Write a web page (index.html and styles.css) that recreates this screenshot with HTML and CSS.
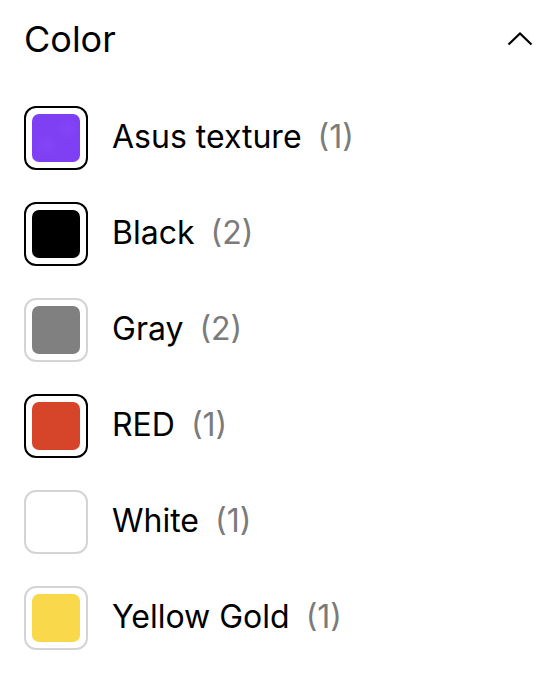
FILE: index.html
```html
<!DOCTYPE html>
<html lang="en">
<head>
    <title>Color filter</title>
    <meta name="viewport" content="width=device-width, initial-scale=1.0">
    <link rel="stylesheet" href="styles.css">
</head>
<body>
    <div class="filter">
        <div class="filter_head">
            <span class="filter_title">Color</span>
            <svg class="chevron" width="26" height="14" viewBox="0 0 26 14">
                <polyline points="1.5,12.5 13,1.5 24.5,12.5" fill="none" stroke="#000" stroke-width="2.2"/>
            </svg>
        </div>
        <ul class="options">
            <li class="option">
                <span class="swatch selected"><span class="fill texture"></span></span>
                <span class="label">Asus texture</span><span class="count">(1)</span>
            </li>
            <li class="option">
                <span class="swatch selected"><span class="fill black"></span></span>
                <span class="label">Black</span><span class="count">(2)</span>
            </li>
            <li class="option">
                <span class="swatch"><span class="fill gray"></span></span>
                <span class="label">Gray</span><span class="count">(2)</span>
            </li>
            <li class="option">
                <span class="swatch selected"><span class="fill red"></span></span>
                <span class="label">RED</span><span class="count">(1)</span>
            </li>
            <li class="option">
                <span class="swatch"><span class="fill white"></span></span>
                <span class="label">White</span><span class="count">(1)</span>
            </li>
            <li class="option">
                <span class="swatch"><span class="fill gold"></span></span>
                <span class="label">Yellow Gold</span><span class="count">(1)</span>
            </li>
        </ul>
    </div>
</body>
</html>
```

FILE: styles.css
```css
body {
    margin: 0;
    background-color: #fff;
    color: #000;
    font-family: Inter, "Noto Sans", sans-serif;
}
.filter {
    padding: 15px 24px 0 24px;
}
.filter_head {
    display: flex;
    align-items: center;
    justify-content: space-between;
    height: 48px;
}
.filter_title {
    font-size: 36px;
    line-height: 48px;
    font-weight: 400;
}
.chevron {
    margin-right: -1px;
}
.options {
    list-style: none;
    margin: 43px 0 0 0;
    padding: 0;
    display: flex;
    flex-direction: column;
    gap: 32px;
}
.option {
    display: flex;
    align-items: center;
    height: 64px;
    font-size: 32px;
    line-height: 40px;
}
.swatch {
    box-sizing: border-box;
    width: 64px;
    height: 64px;
    border: 2px solid #d4d4d4;
    border-radius: 12px;
    padding: 6px;
    margin-right: 24px;
    flex-shrink: 0;
}
.swatch.selected {
    border-color: #000;
}
.fill {
    display: block;
    width: 48px;
    height: 48px;
    border-radius: 7px;
}
.texture {
    background-color: #7f40f4;
    background-image:
        radial-gradient(circle at 30% 65%, rgba(150, 100, 255, 0.18) 0, transparent 25%),
        radial-gradient(circle at 75% 30%, rgba(150, 100, 255, 0.15) 0, transparent 22%),
        radial-gradient(circle at 85% 75%, rgba(120, 60, 240, 0.2) 0, transparent 25%);
}
.black {
    background-color: #000;
}
.gray {
    background-color: #808080;
}
.red {
    background-color: #d6452a;
}
.white {
    background-color: #fff;
}
.gold {
    background-color: #f9d84b;
}
.label {
    position: relative;
    top: -1px;
}
.count {
    position: relative;
    top: -1px;
    margin-left: 16px;
    color: #7b7b7b;
}
```
